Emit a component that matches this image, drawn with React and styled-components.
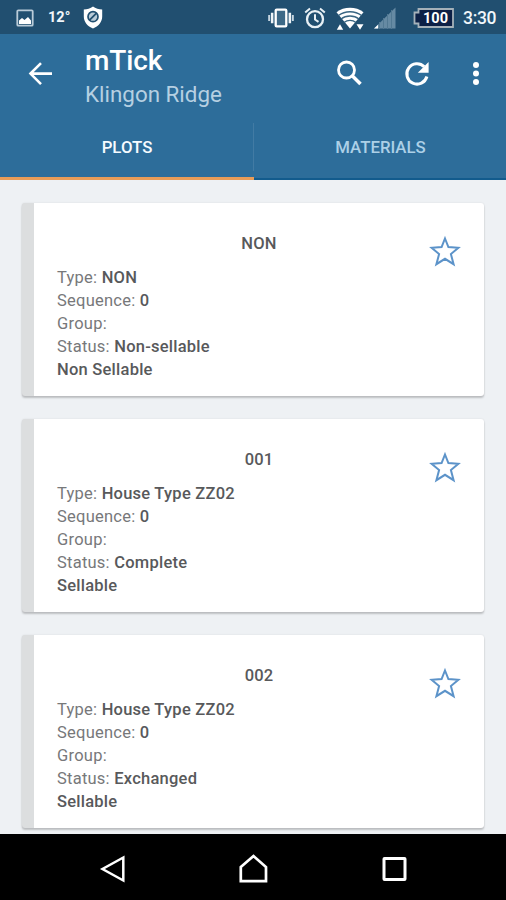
import React from "react";
import styled, { createGlobalStyle } from "styled-components";

const GlobalStyle = createGlobalStyle`
  * {
    box-sizing: border-box;
  }
  body {
    margin: 0;
    background: #eef1f4;
    font-family: Roboto, "Liberation Sans", sans-serif;
  }
  svg {
    display: block;
    flex-shrink: 0;
  }
  button {
    padding: 0;
    border: none;
    background: none;
    color: inherit;
    font: inherit;
  }
`;

const Screen = styled.div`
  width: 506px;
  height: 900px;
  display: flex;
  flex-direction: column;
  overflow: hidden;
`;

const StatusBar = styled.div`
  height: 34px;
  flex-shrink: 0;
  display: flex;
  justify-content: space-between;
  padding: 0 10px 0 16px;
  background: #214f70;
  color: #f1f6fa;
`;

const StatusGroup = styled.div`
  display: flex;
  align-items: center;
  gap: ${({ $gap }) => $gap}px;
  height: 35px;
`;

const Temperature = styled.span`
  width: 21px;
  font-size: 14.5px;
  font-weight: 700;
  white-space: nowrap;
`;

const Clock = styled.span`
  width: 33px;
  font-size: 17.5px;
  font-weight: 500;
  letter-spacing: -0.3px;
  white-space: nowrap;
`;

const BatteryGroup = styled.div`
  display: flex;
  align-items: center;
  gap: 9px;
  margin-left: 7px;
`;

const Header = styled.header`
  height: 146px;
  flex-shrink: 0;
  display: flex;
  flex-direction: column;
  background: #2d6d9a;
  color: #fff;
`;

const Toolbar = styled.div`
  height: 78px;
  display: flex;
  align-items: center;
  padding: 0 16px 0 26px;
`;

const Titles = styled.div`
  flex: 1;
  margin: 8px 0 0 31px;
`;

const AppTitle = styled.h1`
  margin: 0;
  font-size: 28px;
  font-weight: 500;
  line-height: 34px;
  letter-spacing: -0.1px;
`;

const SubTitle = styled.p`
  margin: 0;
  font-size: 22.4px;
  line-height: 33px;
  color: #b6d0e2;
`;

const Actions = styled.div`
  display: flex;
  align-items: center;
  gap: 40px;

  button:last-child {
    margin-left: -9px;
  }
`;

const Tabs = styled.nav`
  flex: 1;
  display: grid;
  grid-template-columns: 254px 252px;
`;

const Tab = styled.button`
  display: flex;
  flex-direction: column;
  font-size: 16.8px;
  font-weight: 500;
  color: ${({ $active }) => ($active ? "#f5fbff" : "#acd0e7")};
  border-bottom: ${({ $active }) =>
    $active ? "3px solid #e89c58" : "2px solid #125b8d"};
`;

const TabLabel = styled.span`
  width: 100%;
  height: 48px;
  margin-top: 11px;
  padding-left: 1px;
  line-height: 49px;
  text-align: center;
  border-right: ${({ $divider }) => ($divider ? "1px solid #427ba4" : "none")};
`;

const List = styled.main`
  flex: 1;
  min-height: 0;
  display: flex;
  flex-direction: column;
  gap: 23px;
  padding: 23px 22px 0;
  background: #eef1f4;
  overflow: hidden;
`;

const Card = styled.article`
  position: relative;
  height: 193px;
  flex-shrink: 0;
  padding: 29px 0 0 23px;
  border-left: 12px solid #dcdedf;
  border-radius: 3px;
  background: #fff;
  box-shadow: 0 2px 2px rgba(0, 0, 0, 0.2), 0 0 2px rgba(0, 0, 0, 0.1);
`;

const CardTitle = styled.h2`
  margin: 0 0 11px -23px;
  font-size: 16.5px;
  font-weight: 500;
  line-height: 23px;
  letter-spacing: 0.2px;
  text-align: center;
  color: #58595b;
`;

const Line = styled.p`
  margin: 0;
  font-size: 16.5px;
  line-height: 23px;
  letter-spacing: 0.24px;
  color: #77787a;

  strong {
    font-weight: 500;
    color: #58595b;
  }
`;

const StarButton = styled.button`
  position: absolute;
  top: 32px;
  right: 23px;
`;

const NavBar = styled.footer`
  height: 66px;
  flex-shrink: 0;
  display: flex;
  justify-content: center;
  align-items: center;
  padding-top: 4px;
  gap: 112px;
  background: #000;
`;

const plots = [
  { name: "NON", type: "NON", sequence: 0, status: "Non-sellable", sale: "Non Sellable" },
  { name: "001", type: "House Type ZZ02", sequence: 0, status: "Complete", sale: "Sellable" },
  { name: "002", type: "House Type ZZ02", sequence: 0, status: "Exchanged", sale: "Sellable" },
];

const PictureIcon = () => (
  <svg width="18" height="18" viewBox="0 0 18 18">
    <rect x="1.3" y="1.3" width="15.4" height="15.4" rx="1" fill="none" stroke="#b9cbd8" strokeWidth="1.8" />
    <path d="M3 15v-3.500l3-2.500 2.500 2 3.500-3 3 3.500V15z" fill="#fff" />
  </svg>
);

const ShieldIcon = () => (
  <svg width="20" height="23" viewBox="0 0 20 23">
    <path d="M10 .5C7.500 2.300 4 3.500.8 3.600v7C.8 16 4.500 20.500 10 22.500c5.500-2 9.200-6.500 9.200-11.900v-7C16 3.500 12.500 2.300 10 .5z" fill="#fff" />
    <circle cx="10" cy="10.700" r="5" fill="#b9cbd8" stroke="#214f70" strokeWidth="1.700" />
    <path d="M6.500 14.200l7-7" stroke="#214f70" strokeWidth="1.700" />
  </svg>
);

const VibrateIcon = () => (
  <svg width="26" height="22" viewBox="0 0 27 22">
    <rect x="8" y="2.300" width="11" height="17.400" rx="1" fill="#3d6987" stroke="#fff" strokeWidth="2.400" />
    <path d="M4.300 5.500v11M22.700 5.500v11" stroke="#eef4f8" strokeWidth="2.600" />
    <path d="M1.200 8v6M25.800 8v6" stroke="#c6d5e0" strokeWidth="2" />
  </svg>
);

const AlarmIcon = () => (
  <svg width="22" height="22" viewBox="0 0 22 22" fill="none" stroke="#e8f0f5" strokeWidth="2.300">
    <circle cx="11" cy="12.200" r="8" />
    <path d="M11 7.300v5.200l3.500 2.300M1.200 5.500L6 1.500M20.800 5.500L16 1.500" strokeWidth="2" />
  </svg>
);

const WifiIcon = () => (
  <svg width="28" height="24" viewBox="0 0 28 24">
    <path d="M.5 6.200C8 .4 20 .4 27.500 6.200L14 22.500z" fill="#fff" />
    <path d="M2.500 9.500c6.500-5 16.500-5 23 0M5 13c5-4 13-4 18 0M8 16.500c3.500-2.900 8.500-2.900 12 0" fill="none" stroke="#386582" strokeWidth="1.300" />
    <path d="M.8 23.800l3.200-5.500 3.200 5.500zM20.500 18.300h7l-3.500 5.500z" fill="#fff" />
  </svg>
);

const SignalIcon = () => (
  <svg width="22" height="22" viewBox="0 0 22 22">
    <path d="M0 21.500L21.500 .5v21z" fill="#668aa3" />
    <path d="M5.500 15v7M9.500 11v11M13.500 7v15M17.500 3v19" stroke="#527993" strokeWidth="1" />
    <path d="M0 21.500l4-3.700v3.700z" fill="#fff" />
  </svg>
);

const BatteryIcon = () => (
  <svg width="41" height="20" viewBox="0 0 41 20">
    <path d="M5.500 1H40v18H5.500v-3.500H1.500v-11h4z" fill="#0c2046" stroke="#a5b1b9" strokeWidth="1.800" />
    <text x="22.500" y="15.200" fill="#fff" fontFamily="Roboto, sans-serif" fontSize="14.500" fontWeight="700" textAnchor="middle">100</text>
  </svg>
);

const BackIcon = () => (
  <svg width="28" height="28" viewBox="0 0 28 28" fill="none" stroke="#fff" strokeWidth="2.600">
    <path d="M26 14.600H4.500M15 4.100L4.500 14.600 15 25.100" />
  </svg>
);

const SearchIcon = () => (
  <svg width="28" height="28" viewBox="0 0 28 28" fill="none" stroke="#fff" strokeWidth="2.800">
    <circle cx="11.500" cy="11" r="8" />
    <path d="M17.200 16.700l8.300 8.300" strokeWidth="3.500" />
  </svg>
);

const RefreshIcon = () => (
  <svg width="28" height="28" viewBox="0 0 28 28">
    <path d="M21.200 7.600A10.200 10.200 0 1 0 23.900 17.500" fill="none" stroke="#fff" strokeWidth="3" />
    <path d="M25.600 3v10.800H14.800z" fill="#fff" />
  </svg>
);

const MoreIcon = () => (
  <svg width="28" height="28" viewBox="0 0 28 28" fill="#fff">
    <circle cx="14" cy="6" r="3" />
    <circle cx="14" cy="14.500" r="3" />
    <circle cx="14" cy="23" r="3" />
  </svg>
);

const StarIcon = () => (
  <svg width="32" height="32" viewBox="0 0 32 32" fill="none" stroke="#5c93c9" strokeWidth="2">
    <path d="M16 3.500l3.400 8.500 10 .8-7.500 6.300 2.700 10.100L16 23.800l-8.600 5.400 2.700-10.100L2.600 12.800l10-.8z" />
  </svg>
);

function PlotCard({ plot }) {
  return (
    <Card>
      <CardTitle>{plot.name}</CardTitle>
      <Line>
        Type: <strong>{plot.type}</strong>
      </Line>
      <Line>
        Sequence: <strong>{plot.sequence}</strong>
      </Line>
      <Line>Group:</Line>
      <Line>
        Status: <strong>{plot.status}</strong>
      </Line>
      <Line>
        <strong>{plot.sale}</strong>
      </Line>
      <StarButton aria-label="Favourite">
        <StarIcon />
      </StarButton>
    </Card>
  );
}

function App() {
  return (
    <>
      <GlobalStyle />
      <Screen>
        <StatusBar>
          <StatusGroup $gap={14}>
            <PictureIcon />
            <Temperature>12°</Temperature>
            <ShieldIcon />
          </StatusGroup>
          <StatusGroup $gap={10}>
            <VibrateIcon />
            <AlarmIcon />
            <WifiIcon />
            <SignalIcon />
            <BatteryGroup>
              <BatteryIcon />
              <Clock>3:30</Clock>
            </BatteryGroup>
          </StatusGroup>
        </StatusBar>
        <Header>
          <Toolbar>
            <button aria-label="Back">
              <BackIcon />
            </button>
            <Titles>
              <AppTitle>mTick</AppTitle>
              <SubTitle>Klingon Ridge</SubTitle>
            </Titles>
            <Actions>
              <button aria-label="Search">
                <SearchIcon />
              </button>
              <button aria-label="Refresh">
                <RefreshIcon />
              </button>
              <button aria-label="More">
                <MoreIcon />
              </button>
            </Actions>
          </Toolbar>
          <Tabs>
            <Tab $active>
              <TabLabel $divider>PLOTS</TabLabel>
            </Tab>
            <Tab>
              <TabLabel>MATERIALS</TabLabel>
            </Tab>
          </Tabs>
        </Header>
        <List>
          {plots.map((plot) => (
            <PlotCard key={plot.name} plot={plot} />
          ))}
        </List>
        <NavBar>
          <svg width="28" height="30" viewBox="0 0 28 30" fill="none" stroke="#fff" strokeWidth="2.500">
            <path d="M25.300 3.500v23L4.500 15z" />
          </svg>
          <svg width="30" height="30" viewBox="0 0 30 30" fill="none" stroke="#fff" strokeWidth="2.700">
            <path d="M2.800 13L15.500 2 28 13v14.200H2.800z" />
          </svg>
          <svg width="28" height="30" viewBox="0 0 28 30" fill="none" stroke="#fff" strokeWidth="3">
            <rect x="4" y="4.500" width="21" height="21" rx="0.500" />
          </svg>
        </NavBar>
      </Screen>
    </>
  );
}

export default App;
